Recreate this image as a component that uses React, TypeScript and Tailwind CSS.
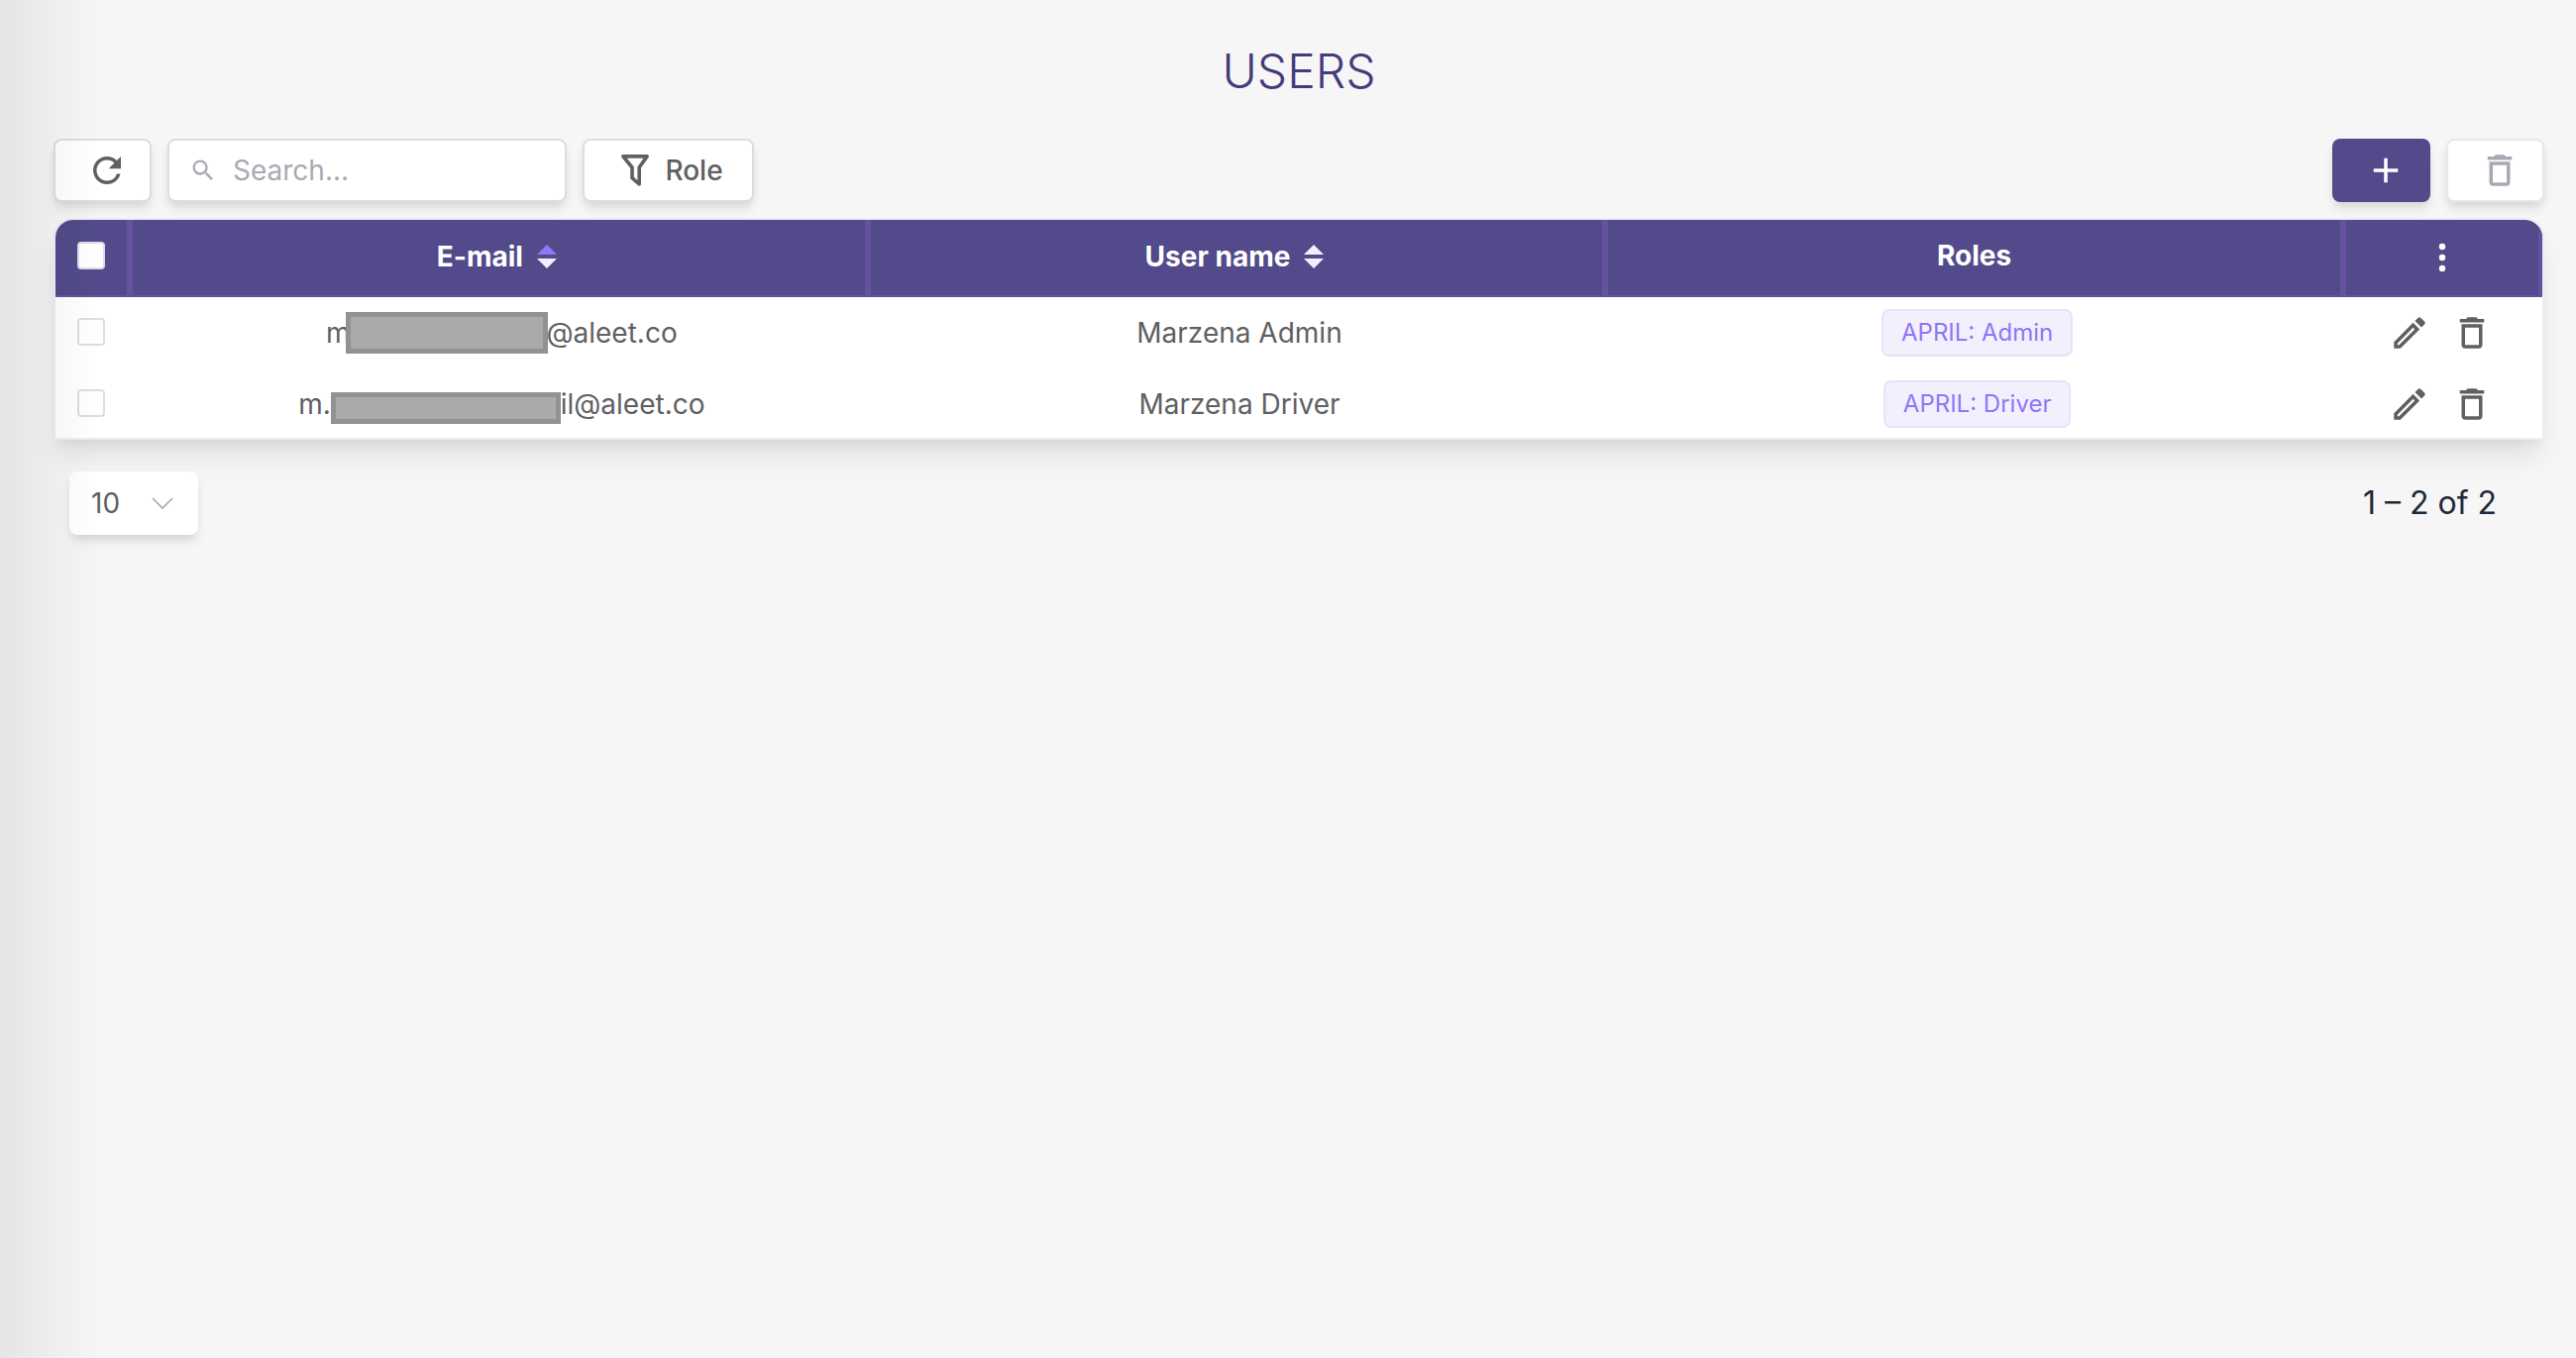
import { useState } from 'react'
import { MdAdd, MdDeleteOutline, MdOutlineModeEdit, MdRefresh, MdSearch } from 'react-icons/md'

type User = {
  id: number
  // visible ends of the masked address
  head: string
  tail: string
  mask: string
  name: string
  role: string
}

const USERS: User[] = [
  { id: 1, head: 'm', tail: '@aleet.co', mask: 'w-[204px] h-[42px] -ml-1 -mr-0.5', name: 'Marzena Admin', role: 'APRIL: Admin' },
  { id: 2, head: 'm.', tail: 'il@aleet.co', mask: 'w-[232px] h-8 mt-2', name: 'Marzena Driver', role: 'APRIL: Driver' },
]

const BUTTON_SHADOW = 'shadow-[0_8px_12px_-2px_rgba(0,0,0,0.1),0_4px_8px_-2px_rgba(0,0,0,0.06)]'
const CHECKBOX =
  'block size-7 mx-auto appearance-none rounded-sm border-2 border-[#dadde6] bg-white checked:bg-[#9077f7]'

function FunnelIcon() {
  return (
    <svg width="28" height="32" viewBox="0 0 28 32" fill="none" stroke="currentColor" strokeWidth="3.6" strokeLinejoin="round">
      <path d="M1.9 1.9h24.2L18.2 13v17L11 23.6V13z" />
    </svg>
  )
}

function SortIcon({ active }: { active?: boolean }) {
  return (
    <svg width="20" height="24" viewBox="0 0 20 24">
      <path d="M10 0l10 10H0z" fill={active ? '#9077f7' : '#f3effe'} />
      <path d="M10 24L0 14h20z" fill="#f3effe" />
    </svg>
  )
}

function DotsIcon() {
  return (
    <svg width="8" height="30" viewBox="0 0 8 30" fill="currentColor">
      <circle cx="4" cy="4" r="3.2" />
      <circle cx="4" cy="15" r="3.2" />
      <circle cx="4" cy="26" r="3.2" />
    </svg>
  )
}

function Toolbar() {
  return (
    <div className="flex items-center gap-4 h-16 mb-4">
      <button
        aria-label="Refresh"
        className={`flex items-center justify-center w-[99px] h-16 pl-2 rounded-lg border-2 border-[#dadde6] bg-white ${BUTTON_SHADOW}`}
      >
        <MdRefresh size={42} />
      </button>

      <label
        className={`flex items-center w-[403px] h-16 pl-5 pr-4 gap-4 rounded-lg border-2 border-[#dadde6] bg-white text-[#a8aab3] ${BUTTON_SHADOW}`}
      >
        <MdSearch size={28} className="shrink-0" />
        <input
          type="text"
          aria-label="Search"
          placeholder="Search..."
          className="min-w-0 flex-1 bg-transparent text-[#5f6063] placeholder:text-[#a8aab3] outline-none"
        />
      </label>

      <button
        className={`flex items-center justify-center gap-4 w-[173px] h-16 pl-2 rounded-lg border-2 border-[#dadde6] bg-white font-medium ${BUTTON_SHADOW}`}
      >
        <FunnelIcon />
        Role
      </button>

      <button
        aria-label="Add user"
        className={`flex items-center justify-center w-[99px] h-16 ml-auto pl-2 rounded-lg bg-[#524a8a] text-white ${BUTTON_SHADOW}`}
      >
        <MdAdd size={42} />
      </button>
      <button
        aria-label="Delete selected"
        disabled
        className={`flex items-center justify-center w-[99px] h-16 pl-2 rounded-lg border-2 border-[#e7e7f0] bg-white text-[#a8aab3] ${BUTTON_SHADOW}`}
      >
        <MdDeleteOutline size={42} />
      </button>
    </div>
  )
}

export default function App() {
  const [selected, setSelected] = useState<number[]>([])

  const toggle = (id: number) =>
    setSelected((s) => (s.includes(id) ? s.filter((x) => x !== id) : [...s, id]))

  return (
    <div className="relative min-h-screen bg-[#f6f6f6] pt-[42px] pl-[54px] pr-8 font-['Inter','Liberation_Sans',sans-serif] text-[28px] leading-9 text-[#5f6063]">
      <h1 className="mb-[38px] text-center text-5xl leading-[60px] font-light text-[#433b7c]">USERS</h1>

      <Toolbar />

      <div className="overflow-hidden rounded-t-[20px] border-2 border-[#e9edf4] bg-white shadow-[0_20px_30px_-6px_rgba(0,0,0,0.1),0_8px_12px_-4px_rgba(0,0,0,0.05)]">
        <table className="w-full table-fixed border-separate border-spacing-0 text-center">
          <thead>
            <tr className="h-[78px] bg-[#524a8a] text-white *:border-b-2 *:border-[#6452a0] *:pb-1 *:font-bold">
              <th className="w-[78px] border-r-[6px]">
                <input
                  type="checkbox"
                  aria-label="Select all"
                  className={CHECKBOX}
                  checked={selected.length === USERS.length}
                  onChange={(e) => setSelected(e.target.checked ? USERS.map((u) => u.id) : [])}
                />
              </th>
              <th className="border-r-[6px]">
                <button className="inline-flex items-center gap-[14px] pr-1 align-middle">
                  E-mail <SortIcon active />
                </button>
              </th>
              <th className="border-r-[6px]">
                <button className="inline-flex items-center gap-[14px] pr-1 align-middle">
                  User name <SortIcon />
                </button>
              </th>
              <th className="border-r-[6px]">Roles</th>
              <th className="w-[198px] border-r-4">
                <button aria-label="Columns" className="inline-flex align-middle">
                  <DotsIcon />
                </button>
              </th>
            </tr>
          </thead>
          <tbody>
            {USERS.map((u) => (
              <tr key={u.id} className="h-[72px] last:h-[70px] not-last:*:border-b-2 *:border-white *:not-first:pt-0.5">
                <td className="pr-[6px]">
                  <input
                    type="checkbox"
                    aria-label={`Select ${u.name}`}
                    className={CHECKBOX}
                    checked={selected.includes(u.id)}
                    onChange={() => toggle(u.id)}
                  />
                </td>
                <td>
                  <span className="flex items-center justify-center">
                    {u.head}
                    <span className={`relative border-[5px] border-[#929292] bg-[#aaaaaa] ${u.mask}`} />
                    {u.tail}
                  </span>
                </td>
                <td>{u.name}</td>
                <td>
                  <span className="inline-flex items-center h-12 px-[18px] rounded-lg border-2 border-[#e7e2fd] bg-[#f3f0fe] align-middle text-2xl text-[#8f75f7]">
                    {u.role}
                  </span>
                </td>
                <td>
                  <span className="flex items-center justify-center gap-[21px] pr-2">
                    <button aria-label={`Edit ${u.name}`}>
                      <MdOutlineModeEdit size={42} />
                    </button>
                    <button aria-label={`Delete ${u.name}`}>
                      <MdDeleteOutline size={42} />
                    </button>
                  </span>
                </td>
              </tr>
            ))}
          </tbody>
        </table>
      </div>

      <div className="mt-8 flex items-center justify-between pl-4 pr-12">
        <div className="relative">
          <select
            aria-label="Rows per page"
            className={`w-[130px] h-16 pl-[22px] appearance-none rounded-lg bg-white ${BUTTON_SHADOW}`}
          >
            <option>10</option>
            <option>25</option>
            <option>50</option>
          </select>
          <svg
            className="pointer-events-none absolute right-6 top-6 text-[#a8aab3]"
            width="24"
            height="16"
            viewBox="0 0 24 16"
            fill="none"
            stroke="currentColor"
            strokeWidth="1.6"
          >
            <path d="M2 3l10 10L22 3" />
          </svg>
        </div>
        <p className="text-[32px] leading-10 text-[#1f2937]">1 – 2 of 2</p>
      </div>

      {/* shade cast by the side menu */}
      <div className="pointer-events-none absolute inset-y-0 left-0 w-[100px] bg-linear-to-r from-black/7 to-black/0" />
    </div>
  )
}
